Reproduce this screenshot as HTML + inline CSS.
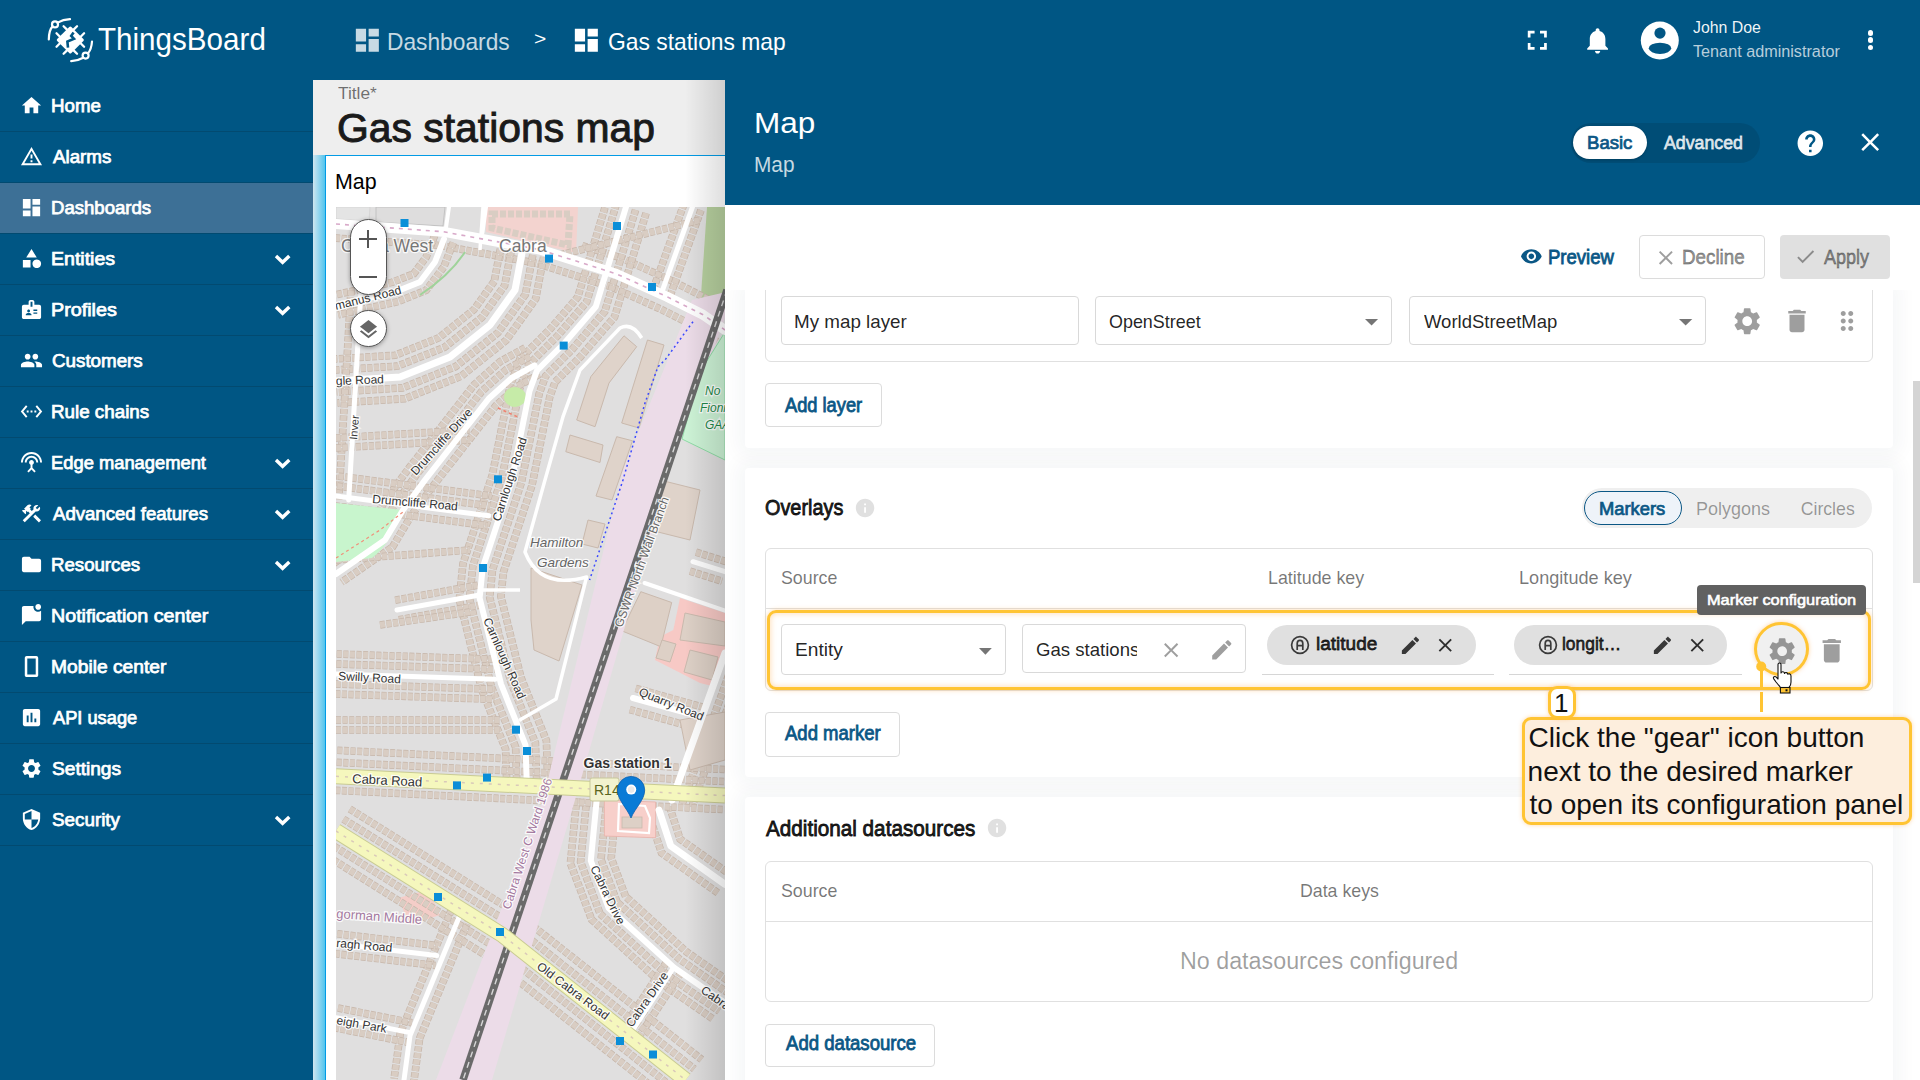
<!DOCTYPE html><html><head><meta charset="utf-8"><style>
html,body{margin:0;padding:0;width:1920px;height:1080px;overflow:hidden;background:#fff}
body{position:relative;font-family:"Liberation Sans",sans-serif}
.b{position:absolute;box-sizing:border-box}
.t{position:absolute;white-space:pre}
.ic{position:absolute;overflow:visible}
</style></head><body>
<div class="b" style="left:0px;top:0px;width:1920px;height:80px;z-index:1;background:#005684"></div>
<div class="b" style="left:0px;top:80px;width:313px;height:1000px;z-index:1;background:#005684"></div>
<div class="b" style="left:0px;top:182px;width:313px;height:51px;z-index:1;background:#3d7096"></div>
<div class="b" style="left:0px;top:131px;width:313px;height:1px;z-index:2;background:#024a70"></div>
<div class="b" style="left:0px;top:182px;width:313px;height:1px;z-index:2;background:#024a70"></div>
<div class="b" style="left:0px;top:233px;width:313px;height:1px;z-index:2;background:#024a70"></div>
<div class="b" style="left:0px;top:284px;width:313px;height:1px;z-index:2;background:#024a70"></div>
<div class="b" style="left:0px;top:335px;width:313px;height:1px;z-index:2;background:#024a70"></div>
<div class="b" style="left:0px;top:386px;width:313px;height:1px;z-index:2;background:#024a70"></div>
<div class="b" style="left:0px;top:437px;width:313px;height:1px;z-index:2;background:#024a70"></div>
<div class="b" style="left:0px;top:488px;width:313px;height:1px;z-index:2;background:#024a70"></div>
<div class="b" style="left:0px;top:539px;width:313px;height:1px;z-index:2;background:#024a70"></div>
<div class="b" style="left:0px;top:590px;width:313px;height:1px;z-index:2;background:#024a70"></div>
<div class="b" style="left:0px;top:641px;width:313px;height:1px;z-index:2;background:#024a70"></div>
<div class="b" style="left:0px;top:692px;width:313px;height:1px;z-index:2;background:#024a70"></div>
<div class="b" style="left:0px;top:743px;width:313px;height:1px;z-index:2;background:#024a70"></div>
<div class="b" style="left:0px;top:794px;width:313px;height:1px;z-index:2;background:#024a70"></div>
<div class="b" style="left:0px;top:845px;width:313px;height:1px;z-index:2;background:#024a70"></div>
<svg class="ic" style="left:40px;top:10px;width:60px;height:60px;z-index:6" viewBox="0 0 60 60">
<g fill="none" stroke="#fff" stroke-width="2.2" stroke-linecap="round">
<path d="M8.8 29.4 Q9 20 12.6 16.4"/><path d="M17.6 12.6 Q23 9.6 30 9.2"/>
<circle cx="15" cy="14.4" r="3"/>
<path d="M52 31.5 Q51.5 39 48 43.4"/><path d="M43.2 47.8 Q38 50.8 31.2 51.2"/>
<circle cx="45.6" cy="45.6" r="3"/>
</g>
<g transform="translate(30.3 30) rotate(45)">
<rect x="-10" y="-10" width="20" height="20" rx="1.5" fill="#fff"/>
<g stroke="#fff" stroke-width="2.3" stroke-linecap="round">
<path d="M-5 -10 V-14.5 M5 -10 V-14.5 M-5 10 V14.5 M5 10 V14.5 M-10 -5 H-14.5 M-10 5 H-14.5 M10 -5 H14.5 M10 5 H14.5"/>
</g></g>
<path d="M33.6 22.4 L31.2 25.8 L34 28.8 L27.4 31.6 L28 37.6" fill="none" stroke="#015684" stroke-width="2.6" stroke-linejoin="miter"/>
</svg>
<svg class="ic" style="left:352.2px;top:24.9px;width:30.7px;height:30.7px;z-index:6;" viewBox="0 0 24 24"><path fill="rgba(255,255,255,0.78)" d="M3 13h8V3H3v10zm0 8h8v-6H3v6zm10 0h8V11h-8v10zm0-18v6h8V3h-8z"/></svg>
<svg class="ic" style="left:571.4px;top:24.9px;width:30.7px;height:30.7px;z-index:6;" viewBox="0 0 24 24"><path fill="#fff" d="M3 13h8V3H3v10zm0 8h8v-6H3v6zm10 0h8V11h-8v10zm0-18v6h8V3h-8z"/></svg>
<svg class="ic" style="left:1521.2px;top:24.2px;width:32.6px;height:32.6px;z-index:6;" viewBox="0 0 24 24"><path fill="#fff" d="M7 14H5v5h5v-2H7v-3zm-2-4h2V7h3V5H5v5zm12 7h-3v2h5v-5h-2v3zM14 5v2h3v3h2V5h-5z"/></svg>
<svg class="ic" style="left:1581.8px;top:24.75px;width:31.2px;height:31.2px;z-index:6;" viewBox="0 0 24 24"><path fill="#fff" d="M12 22c1.1 0 2-.9 2-2h-4c0 1.1.89 2 2 2zm6-6v-5c0-3.07-1.64-5.64-4.5-6.32V4c0-.83-.67-1.5-1.5-1.5s-1.5.67-1.5 1.5v.68C7.63 5.36 6 7.92 6 11v5l-2 2v1h16v-1l-2-2z"/></svg>
<svg class="ic" style="left:1640px;top:21px;width:40px;height:40px;z-index:6" viewBox="1640 21 40 40">
<circle cx="1659.8" cy="40.45" r="19" fill="#fff"/><circle cx="1660" cy="33.1" r="5.6" fill="#015684"/>
<ellipse cx="1660" cy="48.3" rx="11.2" ry="5.6" fill="#015684"/></svg>
<div class="b" style="left:1867.5px;top:30.0px;width:5.5px;height:5.5px;z-index:6;background:#fff;border-radius:50%"></div>
<div class="b" style="left:1867.5px;top:37.25px;width:5.5px;height:5.5px;z-index:6;background:#fff;border-radius:50%"></div>
<div class="b" style="left:1867.5px;top:44.5px;width:5.5px;height:5.5px;z-index:6;background:#fff;border-radius:50%"></div>
<svg class="ic" style="left:20px;top:94px;width:23px;height:23px;z-index:6;" viewBox="0 0 24 24"><path fill="#fff" d="M10 20v-6h4v6h5v-8h3L12 3 2 12h3v8z"/></svg>
<svg class="ic" style="left:20px;top:145px;width:23px;height:23px;z-index:6;" viewBox="0 0 24 24"><path fill="#fff" d="M12 5.99L19.53 19H4.47L12 5.99M12 2L1 21h22L12 2zm1 14h-2v2h2v-2zm0-6h-2v4h2v-4z"/></svg>
<svg class="ic" style="left:20px;top:196px;width:23px;height:23px;z-index:6;" viewBox="0 0 24 24"><path fill="#fff" d="M3 13h8V3H3v10zm0 8h8v-6H3v6zm10 0h8V11h-8v10zm0-18v6h8V3h-8z"/></svg>
<svg class="ic" style="left:20px;top:247px;width:23px;height:23px;z-index:6;" viewBox="0 0 24 24"><path fill="#fff" d="M12 2l-5.5 9h11zM17.5 13a4.5 4.5 0 1 0 0.001 0zM3 13.5h8v8H3z"/></svg>
<svg class="ic" style="left:270px;top:233px;width:30px;height:51px;z-index:6" viewBox="270 233 30 51"><polyline points="276,256 282.6,262.3 289.3,256" fill="none" stroke="#fff" stroke-width="3.4"/></svg>
<svg class="ic" style="left:20px;top:298px;width:23px;height:23px;z-index:6;" viewBox="0 0 24 24"><path fill="#fff" d="M20 7h-5V4c0-1.1-.9-2-2-2h-2c-1.1 0-2 .9-2 2v3H4c-1.1 0-2 .9-2 2v11c0 1.1.9 2 2 2h16c1.1 0 2-.9 2-2V9c0-1.1-.9-2-2-2zM9 12c.83 0 1.5.67 1.5 1.5S9.83 15 9 15s-1.5-.67-1.5-1.5S8.17 12 9 12zm3 6H6v-.43c0-.6.36-1.15.92-1.39.64-.28 1.34-.43 2.08-.43s1.44.15 2.08.43c.55.24.92.78.92 1.39V18zm1-9h-2V4h2v5zm5 7.5h-4V15h4v1.5zm0-3h-4V12h4v1.5z"/></svg>
<svg class="ic" style="left:270px;top:284px;width:30px;height:51px;z-index:6" viewBox="270 284 30 51"><polyline points="276,307 282.6,313.3 289.3,307" fill="none" stroke="#fff" stroke-width="3.4"/></svg>
<svg class="ic" style="left:20px;top:349px;width:23px;height:23px;z-index:6;" viewBox="0 0 24 24"><path fill="#fff" d="M16 11c1.66 0 2.99-1.34 2.99-3S17.66 5 16 5c-1.66 0-3 1.34-3 3s1.34 3 3 3zm-8 0c1.66 0 2.99-1.34 2.99-3S9.66 5 8 5C6.34 5 5 6.34 5 8s1.34 3 3 3zm0 2c-2.33 0-7 1.17-7 3.5V19h14v-2.5c0-2.33-4.670-3.5-7-3.5zm8 0c-.29 0-.62.02-.97.05 1.16.84 1.97 1.97 1.97 3.45V19h6v-2.5c0-2.33-4.67-3.5-7-3.5z"/></svg>
<svg class="ic" style="left:20px;top:400px;width:23px;height:23px;z-index:6;" viewBox="0 0 24 24"><path fill="#fff" d="M7.77 6.76L6.23 5.48.82 12l5.41 6.52 1.54-1.28L3.42 12l4.35-5.24zM7 13h2v-2H7v2zm10-2h-2v2h2v-2zm-6 2h2v-2h-2v2zm6.77-7.52l-1.54 1.28L20.58 12l-4.35 5.24 1.54 1.28L23.18 12l-5.41-6.52z"/></svg>
<svg class="ic" style="left:20px;top:451px;width:23px;height:23px;z-index:6;" viewBox="0 0 24 24"><path fill="#fff" d="M12 5c-3.87 0-7 3.13-7 7h2c0-2.76 2.24-5 5-5s5 2.24 5 5h2c0-3.87-3.13-7-7-7zm1 9.29c.88-.39 1.5-1.26 1.5-2.29 0-1.38-1.12-2.5-2.5-2.5S9.5 10.62 9.5 12c0 1.02.62 1.9 1.5 2.290v3.3L7.59 21 9 22.41l3-3 3 3L16.41 21 13 17.59v-3.3zM12 1C5.93 1 1 5.93 1 12h2c0-4.97 4.03-9 9-9s9 4.03 9 9h2c0-6.07-4.93-11-11-11z"/></svg>
<svg class="ic" style="left:270px;top:437px;width:30px;height:51px;z-index:6" viewBox="270 437 30 51"><polyline points="276,460 282.6,466.3 289.3,460" fill="none" stroke="#fff" stroke-width="3.4"/></svg>
<svg class="ic" style="left:20px;top:502px;width:23px;height:23px;z-index:6;" viewBox="0 0 24 24"><path fill="#fff" d="M13.78 15.3l6 6 2.11-2.16-6-6zM17.5 10c1.93 0 3.5-1.57 3.5-3.5 0-.58-.16-1.12-.41-1.6l-2.7 2.7-1.49-1.49 2.7-2.7c-.48-.25-1.02-.41-1.6-.41C15.57 3 14 4.57 14 6.5c0 .41.08.8.21 1.16l-1.85 1.85-1.78-1.78.71-.71-1.41-1.41L12 3.49c-1.17-1.17-3.07-1.17-4.24 0L4.22 7.03l1.41 1.41H2.81l-.71.71 3.54 3.54.71-.71V9.15l1.41 1.41.71-.71 1.78 1.78-7.41 7.41 2.12 2.12L16.34 9.79c.36.13.75.21 1.16.21z"/></svg>
<svg class="ic" style="left:270px;top:488px;width:30px;height:51px;z-index:6" viewBox="270 488 30 51"><polyline points="276,511 282.6,517.3 289.3,511" fill="none" stroke="#fff" stroke-width="3.4"/></svg>
<svg class="ic" style="left:20px;top:553px;width:23px;height:23px;z-index:6;" viewBox="0 0 24 24"><path fill="#fff" d="M10 4H4c-1.1 0-1.99.9-1.99 2L2 18c0 1.1.9 2 2 2h16c1.1 0 2-.9 2-2V8c0-1.1-.9-2-2-2h-8l-2-2z"/></svg>
<svg class="ic" style="left:270px;top:539px;width:30px;height:51px;z-index:6" viewBox="270 539 30 51"><polyline points="276,562 282.6,568.3 289.3,562" fill="none" stroke="#fff" stroke-width="3.4"/></svg>
<svg class="ic" style="left:20px;top:604px;width:23px;height:23px;z-index:6;" viewBox="0 0 24 24"><path fill="#fff" d="M22 6.98V16c0 1.1-.9 2-2 2H6l-4 4V4c0-1.1.9-2 2-2h10.1c-.06.32-.1.66-.1 1 0 2.76 2.24 5 5 5 1.13 0 2.16-.39 3-1.02zM16 3c0 1.66 1.34 3 3 3s3-1.34 3-3-1.34-3-3-3-3 1.34-3 3z"/></svg>
<svg class="ic" style="left:20px;top:655px;width:23px;height:23px;z-index:6;" viewBox="0 0 24 24"><path fill="#fff" d="M17 1H7C5.9 1 5 1.9 5 3v18c0 1.1.9 2 2 2h10c1.1 0 2-.9 2-2V3c0-1.1-.9-2-2-2zm-0.6 19.4H7.6V3.6h8.8z"/></svg>
<svg class="ic" style="left:20px;top:706px;width:23px;height:23px;z-index:6;" viewBox="0 0 24 24"><path fill="#fff" d="M19 3H5c-1.1 0-2 .9-2 2v14c0 1.1.9 2 2 2h14c1.1 0 2-.9 2-2V5c0-1.1-.9-2-2-2zM9 17H7v-7h2v7zm4 0h-2V7h2v10zm4 0h-2v-4h2v4z"/></svg>
<svg class="ic" style="left:20px;top:757px;width:23px;height:23px;z-index:6;" viewBox="0 0 24 24"><path fill="#fff" d="M19.14 12.94c.04-.3.06-.61.06-.94 0-.32-.02-.64-.07-.94l2.03-1.58c.18-.14.23-.41.12-.61l-1.92-3.32c-.12-.22-.37-.29-.59-.22l-2.39.96c-.5-.38-1.03-.7-1.62-.94l-.36-2.54c-.04-.24-.24-.41-.48-.41h-3.84c-.24 0-.43.17-.47.41l-.36 2.54c-.59.24-1.13.57-1.62.94l-2.39-.96c-.22-.08-.47 0-.59.22L2.74 8.87c-.12.21-.08.47.12.61l2.03 1.58c-.05.3-.09.63-.09.94s.02.64.07.94l-2.03 1.58c-.18.14-.23.41-.12.61l1.92 3.32c.12.22.37.29.59.22l2.39-.96c.5.38 1.03.7 1.62.94l.36 2.54c.05.24.24.41.48.41h3.84c.24 0 .44-.17.47-.41l.36-2.54c.59-.24 1.13-.56 1.62-.94l2.39.96c.22.08.47 0 .59-.22l1.92-3.32c.12-.22.07-.47-.12-.61l-2.01-1.58zM12 15.6c-1.98 0-3.6-1.62-3.6-3.6s1.62-3.6 3.6-3.6 3.6 1.62 3.6 3.6-1.62 3.6-3.6 3.6z"/></svg>
<svg class="ic" style="left:20px;top:808px;width:23px;height:23px;z-index:6;" viewBox="0 0 24 24"><path fill="#fff" d="M12 1L3 5v6c0 5.55 3.84 10.74 9 12 5.16-1.26 9-6.45 9-12V5l-9-4zm0 10.99h7c-.53 4.12-3.28 7.79-7 8.94V12H5V6.3l7-3.11v8.8z"/></svg>
<svg class="ic" style="left:270px;top:794px;width:30px;height:51px;z-index:6" viewBox="270 794 30 51"><polyline points="276,817 282.6,823.3 289.3,817" fill="none" stroke="#fff" stroke-width="3.4"/></svg>
<div class="b" style="left:313px;top:80px;width:412px;height:75px;z-index:1;background:#eeeeee"></div>
<div class="b" style="left:313px;top:155px;width:12px;height:925px;z-index:1;background:linear-gradient(90deg,#cfe6f0,#52c4ee)"></div>
<div class="b" style="left:325px;top:155px;width:400px;height:925px;z-index:1;background:#fff;border-left:1.5px solid #039be5;border-top:1.5px solid #039be5"></div>
<svg class="ic" style="left:336px;top:207px;width:389px;height:873px;z-index:2;overflow:hidden" viewBox="336 207 389 873"><rect x="336" y="207" width="389" height="873" fill="#e0dfdf"/><path d="M486 207 L578 207 L576 253 L486 232Z" fill="#f3d3cf"/><path d="M492 214 L570 214 L568 245 L492 228Z" fill="none" stroke="#d9cdc3" stroke-width="7" stroke-dasharray="6 2"/><path d="M707 207 L725 207 L725 300 L700 310Z" fill="#b6cf9e"/><path d="M680 598 L725 613 L725 653 L715 686.7 L700 683 L655 660 L660 636.7 L673.3 630Z" fill="#f7c9c5"/><path d="M640.8 591.7 L671.7 602.5 L660.8 646.7 L621.7 630.8Z" fill="#ddd0c6" stroke="#c9b9ad" stroke-width="1"/><path d="M685 613 L725 622 L725 646 L680 640Z" fill="#ddd0c6" stroke="#c9b9ad" stroke-width="1"/><path d="M690 650 L718 657 L712 680 L684 672Z" fill="#ddd0c6" stroke="#c9b9ad" stroke-width="1"/><path d="M662 640 L676 644 L670 662 L656 658Z" fill="#ddd0c6" stroke="#c9b9ad" stroke-width="1"/><path d="M398 898 L428 890 L440 915 L410 925Z" fill="#f4cdc8"/><path d="M335.0 238.0 L441.2 245.6 L536.3 263.2 L611.0 286.8 L661.0 309.3 L695.5 326.6 L717.0 341.5" fill="none" stroke="#c6b6aa" stroke-width="7.6" stroke-dasharray="5 1.6"/><path d="M335.0 238.0 L441.2 245.6 L536.3 263.2 L611.0 286.8 L661.0 309.3 L695.5 326.6 L717.0 341.5" fill="none" stroke="#d9cdc3" stroke-width="6.2" stroke-dasharray="5 1.6"/><path d="M582.2 245.6 L621.0 257.9 L673.1 281.4 L708.4 299.5" fill="none" stroke="#c6b6aa" stroke-width="7.6" stroke-dasharray="5 1.6"/><path d="M582.2 245.6 L621.0 257.9 L673.1 281.4 L708.4 299.5" fill="none" stroke="#d9cdc3" stroke-width="6.2" stroke-dasharray="5 1.6"/><path d="M532.8 255.0 L525.4 294.4 L498.1 332.6 L455.6 366.6 L402.4 387.9 L336.7 392.0" fill="none" stroke="#c6b6aa" stroke-width="7.6" stroke-dasharray="5 1.6"/><path d="M532.8 255.0 L525.4 294.4 L498.1 332.6 L455.6 366.6 L402.4 387.9 L336.7 392.0" fill="none" stroke="#d9cdc3" stroke-width="6.2" stroke-dasharray="5 1.6"/><path d="M511.2 251.0 L504.6 285.6 L481.9 317.4 L444.4 347.4 L397.6 366.1 L335.3 370.0" fill="none" stroke="#c6b6aa" stroke-width="7.6" stroke-dasharray="5 1.6"/><path d="M511.2 251.0 L504.6 285.6 L481.9 317.4 L444.4 347.4 L397.6 366.1 L335.3 370.0" fill="none" stroke="#d9cdc3" stroke-width="6.2" stroke-dasharray="5 1.6"/><path d="M543.6 257.1 L535.7 298.8 L506.1 340.3 L461.2 376.2 L404.9 398.7 L337.4 403.0" fill="none" stroke="#c6b6aa" stroke-width="7.6" stroke-dasharray="5 1.6"/><path d="M543.6 257.1 L535.7 298.8 L506.1 340.3 L461.2 376.2 L404.9 398.7 L337.4 403.0" fill="none" stroke="#d9cdc3" stroke-width="6.2" stroke-dasharray="5 1.6"/><path d="M500.4 248.9 L494.3 281.2 L473.9 309.7 L438.8 337.8 L395.1 355.3 L334.6 359.0" fill="none" stroke="#c6b6aa" stroke-width="7.6" stroke-dasharray="5 1.6"/><path d="M500.4 248.9 L494.3 281.2 L473.9 309.7 L438.8 337.8 L395.1 355.3 L334.6 359.0" fill="none" stroke="#d9cdc3" stroke-width="6.2" stroke-dasharray="5 1.6"/><path d="M453.3 242.6 L443.8 266.9 L426.3 290.2 L398.0 301.6 L338.2 314.8" fill="none" stroke="#c6b6aa" stroke-width="7.6" stroke-dasharray="5 1.6"/><path d="M453.3 242.6 L443.8 266.9 L426.3 290.2 L398.0 301.6 L338.2 314.8" fill="none" stroke="#d9cdc3" stroke-width="6.2" stroke-dasharray="5 1.6"/><path d="M434.7 235.4 L426.2 257.1 L413.7 273.8 L392.0 282.4 L333.8 295.2" fill="none" stroke="#c6b6aa" stroke-width="7.6" stroke-dasharray="5 1.6"/><path d="M434.7 235.4 L426.2 257.1 L413.7 273.8 L392.0 282.4 L333.8 295.2" fill="none" stroke="#d9cdc3" stroke-width="6.2" stroke-dasharray="5 1.6"/><path d="M351.0 290.4 L338.7 499.4" fill="none" stroke="#c6b6aa" stroke-width="7.6" stroke-dasharray="5 1.6"/><path d="M351.0 290.4 L338.7 499.4" fill="none" stroke="#d9cdc3" stroke-width="6.2" stroke-dasharray="5 1.6"/><path d="M635.6 209.9 L604.7 311.7 L572.3 349.3 L545.6 376.0 L539.2 393.7 L521.4 482.6 L492.5 569.9 L489.7 597.3 L510.5 680.9 L535.4 742.9 L537.0 789.7" fill="none" stroke="#c6b6aa" stroke-width="7.6" stroke-dasharray="5 1.6"/><path d="M635.6 209.9 L604.7 311.7 L572.3 349.3 L545.6 376.0 L539.2 393.7 L521.4 482.6 L492.5 569.9 L489.7 597.3 L510.5 680.9 L535.4 742.9 L537.0 789.7" fill="none" stroke="#d9cdc3" stroke-width="6.2" stroke-dasharray="5 1.6"/><path d="M616.4 204.1 L586.7 301.9 L557.7 335.7 L528.4 365.0 L519.8 388.3 L502.0 477.4 L472.9 565.7 L469.5 598.7 L491.5 687.1 L515.6 747.1 L517.0 790.3" fill="none" stroke="#c6b6aa" stroke-width="7.6" stroke-dasharray="5 1.6"/><path d="M616.4 204.1 L586.7 301.9 L557.7 335.7 L528.4 365.0 L519.8 388.3 L502.0 477.4 L472.9 565.7 L469.5 598.7 L491.5 687.1 L515.6 747.1 L517.0 790.3" fill="none" stroke="#d9cdc3" stroke-width="6.2" stroke-dasharray="5 1.6"/><path d="M606.9 201.2 L577.8 297.0 L550.3 328.9 L519.7 359.5 L510.2 385.6 L492.3 474.9 L463.0 563.6 L459.3 599.4 L481.9 690.2 L505.6 749.2 L507.0 790.7" fill="none" stroke="#c6b6aa" stroke-width="7.6" stroke-dasharray="5 1.6"/><path d="M606.9 201.2 L577.8 297.0 L550.3 328.9 L519.7 359.5 L510.2 385.6 L492.3 474.9 L463.0 563.6 L459.3 599.4 L481.9 690.2 L505.6 749.2 L507.0 790.7" fill="none" stroke="#d9cdc3" stroke-width="6.2" stroke-dasharray="5 1.6"/><path d="M646.1 213.1 L614.5 317.1 L580.4 356.8 L555.1 382.1 L549.8 396.7 L532.0 485.4 L503.4 572.2 L500.9 596.5 L521.0 677.5 L546.4 740.6 L548.0 789.3" fill="none" stroke="#c6b6aa" stroke-width="7.6" stroke-dasharray="5 1.6"/><path d="M646.1 213.1 L614.5 317.1 L580.4 356.8 L555.1 382.1 L549.8 396.7 L532.0 485.4 L503.4 572.2 L500.9 596.5 L521.0 677.5 L546.4 740.6 L548.0 789.3" fill="none" stroke="#d9cdc3" stroke-width="6.2" stroke-dasharray="5 1.6"/><path d="M539.4 374.2 L517.5 386.2 L496.1 405.4 L433.0 486.0 L411.3 515.5 L392.5 547.0 L341.7 582.2" fill="none" stroke="#c6b6aa" stroke-width="7.6" stroke-dasharray="5 1.6"/><path d="M539.4 374.2 L517.5 386.2 L496.1 405.4 L433.0 486.0 L411.3 515.5 L392.5 547.0 L341.7 582.2" fill="none" stroke="#d9cdc3" stroke-width="6.2" stroke-dasharray="5 1.6"/><path d="M529.8 356.6 L505.9 369.8 L481.5 391.6 L417.0 474.0 L394.7 504.5 L377.5 533.0 L330.3 565.8" fill="none" stroke="#c6b6aa" stroke-width="7.6" stroke-dasharray="5 1.6"/><path d="M529.8 356.6 L505.9 369.8 L481.5 391.6 L417.0 474.0 L394.7 504.5 L377.5 533.0 L330.3 565.8" fill="none" stroke="#d9cdc3" stroke-width="6.2" stroke-dasharray="5 1.6"/><path d="M525.0 347.9 L500.1 361.6 L474.1 384.8 L409.1 467.9 L386.3 498.9 L370.1 526.0 L324.6 557.6" fill="none" stroke="#c6b6aa" stroke-width="7.6" stroke-dasharray="5 1.6"/><path d="M525.0 347.9 L500.1 361.6 L474.1 384.8 L409.1 467.9 L386.3 498.9 L370.1 526.0 L324.6 557.6" fill="none" stroke="#d9cdc3" stroke-width="6.2" stroke-dasharray="5 1.6"/><path d="M337.3 486.1 L490.1 505.9" fill="none" stroke="#c6b6aa" stroke-width="7.6" stroke-dasharray="5 1.6"/><path d="M337.3 486.1 L490.1 505.9" fill="none" stroke="#d9cdc3" stroke-width="6.2" stroke-dasharray="5 1.6"/><path d="M334.7 505.9 L487.5 525.7" fill="none" stroke="#c6b6aa" stroke-width="7.6" stroke-dasharray="5 1.6"/><path d="M334.7 505.9 L487.5 525.7" fill="none" stroke="#d9cdc3" stroke-width="6.2" stroke-dasharray="5 1.6"/><path d="M338.6 476.2 L491.4 496.0" fill="none" stroke="#c6b6aa" stroke-width="7.6" stroke-dasharray="5 1.6"/><path d="M338.6 476.2 L491.4 496.0" fill="none" stroke="#d9cdc3" stroke-width="6.2" stroke-dasharray="5 1.6"/><path d="M336.3 664.0 L495.3 669.3" fill="none" stroke="#c6b6aa" stroke-width="7.6" stroke-dasharray="5 1.6"/><path d="M336.3 664.0 L495.3 669.3" fill="none" stroke="#d9cdc3" stroke-width="6.2" stroke-dasharray="5 1.6"/><path d="M335.7 684.0 L494.7 689.3" fill="none" stroke="#c6b6aa" stroke-width="7.6" stroke-dasharray="5 1.6"/><path d="M335.7 684.0 L494.7 689.3" fill="none" stroke="#d9cdc3" stroke-width="6.2" stroke-dasharray="5 1.6"/><path d="M336.7 654.0 L495.7 659.3" fill="none" stroke="#c6b6aa" stroke-width="7.6" stroke-dasharray="5 1.6"/><path d="M336.7 654.0 L495.7 659.3" fill="none" stroke="#d9cdc3" stroke-width="6.2" stroke-dasharray="5 1.6"/><path d="M335.3 694.0 L494.3 699.3" fill="none" stroke="#c6b6aa" stroke-width="7.6" stroke-dasharray="5 1.6"/><path d="M335.3 694.0 L494.3 699.3" fill="none" stroke="#d9cdc3" stroke-width="6.2" stroke-dasharray="5 1.6"/><path d="M395.2 600.2 L477.8 585.2" fill="none" stroke="#c6b6aa" stroke-width="7.6" stroke-dasharray="5 1.6"/><path d="M395.2 600.2 L477.8 585.2" fill="none" stroke="#d9cdc3" stroke-width="6.2" stroke-dasharray="5 1.6"/><path d="M398.8 619.8 L481.4 604.8" fill="none" stroke="#c6b6aa" stroke-width="7.6" stroke-dasharray="5 1.6"/><path d="M398.8 619.8 L481.4 604.8" fill="none" stroke="#d9cdc3" stroke-width="6.2" stroke-dasharray="5 1.6"/><path d="M701.0 210.1 L670.5 294.7" fill="none" stroke="#c6b6aa" stroke-width="7.6" stroke-dasharray="5 1.6"/><path d="M701.0 210.1 L670.5 294.7" fill="none" stroke="#d9cdc3" stroke-width="6.2" stroke-dasharray="5 1.6"/><path d="M684.0 203.9 L653.5 288.5" fill="none" stroke="#c6b6aa" stroke-width="7.6" stroke-dasharray="5 1.6"/><path d="M684.0 203.9 L653.5 288.5" fill="none" stroke="#d9cdc3" stroke-width="6.2" stroke-dasharray="5 1.6"/><path d="M696.0 552.2 L728.0 562.2" fill="none" stroke="#c6b6aa" stroke-width="7.6" stroke-dasharray="5 1.6"/><path d="M696.0 552.2 L728.0 562.2" fill="none" stroke="#d9cdc3" stroke-width="6.2" stroke-dasharray="5 1.6"/><path d="M690.0 571.2 L722.0 581.2" fill="none" stroke="#c6b6aa" stroke-width="7.6" stroke-dasharray="5 1.6"/><path d="M690.0 571.2 L722.0 581.2" fill="none" stroke="#d9cdc3" stroke-width="6.2" stroke-dasharray="5 1.6"/><path d="M635.7 688.4 L702.7 707.1" fill="none" stroke="#c6b6aa" stroke-width="7.6" stroke-dasharray="5 1.6"/><path d="M635.7 688.4 L702.7 707.1" fill="none" stroke="#d9cdc3" stroke-width="6.2" stroke-dasharray="5 1.6"/><path d="M629.8 709.6 L696.8 728.3" fill="none" stroke="#c6b6aa" stroke-width="7.6" stroke-dasharray="5 1.6"/><path d="M629.8 709.6 L696.8 728.3" fill="none" stroke="#d9cdc3" stroke-width="6.2" stroke-dasharray="5 1.6"/><path d="M735.3 656.7 L682.3 803.7" fill="none" stroke="#c6b6aa" stroke-width="7.6" stroke-dasharray="5 1.6"/><path d="M735.3 656.7 L682.3 803.7" fill="none" stroke="#d9cdc3" stroke-width="6.2" stroke-dasharray="5 1.6"/><path d="M744.8 660.1 L691.8 807.1" fill="none" stroke="#c6b6aa" stroke-width="7.6" stroke-dasharray="5 1.6"/><path d="M744.8 660.1 L691.8 807.1" fill="none" stroke="#d9cdc3" stroke-width="6.2" stroke-dasharray="5 1.6"/><path d="M669.5 806.6 L680.1 839.1 L731.4 875.4" fill="none" stroke="#c6b6aa" stroke-width="7.6" stroke-dasharray="5 1.6"/><path d="M669.5 806.6 L680.1 839.1 L731.4 875.4" fill="none" stroke="#d9cdc3" stroke-width="6.2" stroke-dasharray="5 1.6"/><path d="M648.5 813.4 L661.5 852.9 L718.6 893.4" fill="none" stroke="#c6b6aa" stroke-width="7.6" stroke-dasharray="5 1.6"/><path d="M648.5 813.4 L661.5 852.9 L718.6 893.4" fill="none" stroke="#d9cdc3" stroke-width="6.2" stroke-dasharray="5 1.6"/><path d="M606.7 801.0 L601.0 859.4 L617.1 902.2 L680.0 959.6 L730.7 994.8" fill="none" stroke="#c6b6aa" stroke-width="7.6" stroke-dasharray="5 1.6"/><path d="M606.7 801.0 L601.0 859.4 L617.1 902.2 L680.0 959.6 L730.7 994.8" fill="none" stroke="#d9cdc3" stroke-width="6.2" stroke-dasharray="5 1.6"/><path d="M586.7 799.0 L580.6 862.0 L600.1 913.8 L667.6 975.2 L719.3 1011.2" fill="none" stroke="#c6b6aa" stroke-width="7.6" stroke-dasharray="5 1.6"/><path d="M586.7 799.0 L580.6 862.0 L600.1 913.8 L667.6 975.2 L719.3 1011.2" fill="none" stroke="#d9cdc3" stroke-width="6.2" stroke-dasharray="5 1.6"/><path d="M616.6 801.9 L611.2 858.0 L625.6 896.5 L686.3 951.7 L736.4 986.6" fill="none" stroke="#c6b6aa" stroke-width="7.6" stroke-dasharray="5 1.6"/><path d="M616.6 801.9 L611.2 858.0 L625.6 896.5 L686.3 951.7 L736.4 986.6" fill="none" stroke="#d9cdc3" stroke-width="6.2" stroke-dasharray="5 1.6"/><path d="M576.8 798.1 L570.4 863.4 L591.6 919.5 L661.3 983.1 L713.6 1019.4" fill="none" stroke="#c6b6aa" stroke-width="7.6" stroke-dasharray="5 1.6"/><path d="M576.8 798.1 L570.4 863.4 L591.6 919.5 L661.3 983.1 L713.6 1019.4" fill="none" stroke="#d9cdc3" stroke-width="6.2" stroke-dasharray="5 1.6"/><path d="M681.3 972.3 L636.5 1040.5" fill="none" stroke="#c6b6aa" stroke-width="7.6" stroke-dasharray="5 1.6"/><path d="M681.3 972.3 L636.5 1040.5" fill="none" stroke="#d9cdc3" stroke-width="6.2" stroke-dasharray="5 1.6"/><path d="M666.3 962.5 L621.5 1030.7" fill="none" stroke="#c6b6aa" stroke-width="7.6" stroke-dasharray="5 1.6"/><path d="M666.3 962.5 L621.5 1030.7" fill="none" stroke="#d9cdc3" stroke-width="6.2" stroke-dasharray="5 1.6"/><path d="M469.6 917.8 L419.7 1038.2 L413.9 1081.3" fill="none" stroke="#c6b6aa" stroke-width="7.6" stroke-dasharray="5 1.6"/><path d="M469.6 917.8 L419.7 1038.2 L413.9 1081.3" fill="none" stroke="#d9cdc3" stroke-width="6.2" stroke-dasharray="5 1.6"/><path d="M451.2 910.2 L400.3 1033.0 L394.1 1078.7" fill="none" stroke="#c6b6aa" stroke-width="7.6" stroke-dasharray="5 1.6"/><path d="M451.2 910.2 L400.3 1033.0 L394.1 1078.7" fill="none" stroke="#d9cdc3" stroke-width="6.2" stroke-dasharray="5 1.6"/><path d="M337.2 933.8 L437.9 945.7" fill="none" stroke="#c6b6aa" stroke-width="7.6" stroke-dasharray="5 1.6"/><path d="M337.2 933.8 L437.9 945.7" fill="none" stroke="#d9cdc3" stroke-width="6.2" stroke-dasharray="5 1.6"/><path d="M334.8 953.6 L435.5 965.5" fill="none" stroke="#c6b6aa" stroke-width="7.6" stroke-dasharray="5 1.6"/><path d="M334.8 953.6 L435.5 965.5" fill="none" stroke="#d9cdc3" stroke-width="6.2" stroke-dasharray="5 1.6"/><path d="M338.0 1008.0 L412.0 1022.8" fill="none" stroke="#c6b6aa" stroke-width="7.6" stroke-dasharray="5 1.6"/><path d="M338.0 1008.0 L412.0 1022.8" fill="none" stroke="#d9cdc3" stroke-width="6.2" stroke-dasharray="5 1.6"/><path d="M334.0 1027.6 L408.0 1042.4" fill="none" stroke="#c6b6aa" stroke-width="7.6" stroke-dasharray="5 1.6"/><path d="M334.0 1027.6 L408.0 1042.4" fill="none" stroke="#d9cdc3" stroke-width="6.2" stroke-dasharray="5 1.6"/><path d="M336.7 762.3 L725.7 781.6" fill="none" stroke="#c6b6aa" stroke-width="7.6" stroke-dasharray="5 1.6"/><path d="M336.7 762.3 L725.7 781.6" fill="none" stroke="#d9cdc3" stroke-width="6.2" stroke-dasharray="5 1.6"/><path d="M335.3 790.3 L724.3 809.6" fill="none" stroke="#c6b6aa" stroke-width="7.6" stroke-dasharray="5 1.6"/><path d="M335.3 790.3 L724.3 809.6" fill="none" stroke="#d9cdc3" stroke-width="6.2" stroke-dasharray="5 1.6"/><path d="M337.3 750.3 L726.3 769.6" fill="none" stroke="#c6b6aa" stroke-width="7.6" stroke-dasharray="5 1.6"/><path d="M337.3 750.3 L726.3 769.6" fill="none" stroke="#d9cdc3" stroke-width="6.2" stroke-dasharray="5 1.6"/><path d="M343.4 819.1 L510.1 923.3 L694.3 1069.0" fill="none" stroke="#c6b6aa" stroke-width="7.6" stroke-dasharray="5 1.6"/><path d="M343.4 819.1 L510.1 923.3 L694.3 1069.0" fill="none" stroke="#d9cdc3" stroke-width="6.2" stroke-dasharray="5 1.6"/><path d="M328.6 842.9 L493.9 946.3 L676.9 1091.0" fill="none" stroke="#c6b6aa" stroke-width="7.6" stroke-dasharray="5 1.6"/><path d="M328.6 842.9 L493.9 946.3 L676.9 1091.0" fill="none" stroke="#d9cdc3" stroke-width="6.2" stroke-dasharray="5 1.6"/><path d="M349.8 809.0 L517.0 913.5 L701.7 1059.6" fill="none" stroke="#c6b6aa" stroke-width="7.6" stroke-dasharray="5 1.6"/><path d="M349.8 809.0 L517.0 913.5 L701.7 1059.6" fill="none" stroke="#d9cdc3" stroke-width="6.2" stroke-dasharray="5 1.6"/><path d="M322.2 853.0 L487.0 956.1 L669.5 1100.4" fill="none" stroke="#c6b6aa" stroke-width="7.6" stroke-dasharray="5 1.6"/><path d="M322.2 853.0 L487.0 956.1 L669.5 1100.4" fill="none" stroke="#d9cdc3" stroke-width="6.2" stroke-dasharray="5 1.6"/><path d="M336.0 448.0 L470.0 440.0" fill="none" stroke="#c6b6aa" stroke-width="7.6" stroke-dasharray="5 1.6"/><path d="M336.0 448.0 L470.0 440.0" fill="none" stroke="#d9cdc3" stroke-width="6.2" stroke-dasharray="5 1.6"/><path d="M335.4 438.0 L469.4 430.0" fill="none" stroke="#c6b6aa" stroke-width="7.6" stroke-dasharray="5 1.6"/><path d="M335.4 438.0 L469.4 430.0" fill="none" stroke="#d9cdc3" stroke-width="6.2" stroke-dasharray="5 1.6"/><path d="M336.0 560.0 L470.0 550.0" fill="none" stroke="#c6b6aa" stroke-width="7.6" stroke-dasharray="5 1.6"/><path d="M336.0 560.0 L470.0 550.0" fill="none" stroke="#d9cdc3" stroke-width="6.2" stroke-dasharray="5 1.6"/><path d="M380.0 625.0 L470.0 612.0" fill="none" stroke="#c6b6aa" stroke-width="7.6" stroke-dasharray="5 1.6"/><path d="M380.0 625.0 L470.0 612.0" fill="none" stroke="#d9cdc3" stroke-width="6.2" stroke-dasharray="5 1.6"/><path d="M336.0 720.0 L500.0 720.0" fill="none" stroke="#c6b6aa" stroke-width="7.6" stroke-dasharray="5 1.6"/><path d="M336.0 720.0 L500.0 720.0" fill="none" stroke="#d9cdc3" stroke-width="6.2" stroke-dasharray="5 1.6"/><path d="M336.0 730.0 L500.0 730.0" fill="none" stroke="#c6b6aa" stroke-width="7.6" stroke-dasharray="5 1.6"/><path d="M336.0 730.0 L500.0 730.0" fill="none" stroke="#d9cdc3" stroke-width="6.2" stroke-dasharray="5 1.6"/><path d="M560.0 255.0 L700.0 220.0" fill="none" stroke="#c6b6aa" stroke-width="7.6" stroke-dasharray="5 1.6"/><path d="M560.0 255.0 L700.0 220.0" fill="none" stroke="#d9cdc3" stroke-width="6.2" stroke-dasharray="5 1.6"/><path d="M692 300 L735 290 L670 470 L575 800 L492 1080 L436 1080 L543 800 L623 470Z" fill="#ecdce8"/><path d="M336 503 L403 510 Q390 545 372 558 L336 562Z" fill="#c8f5cd"/><ellipse cx="515" cy="397" rx="11" ry="10" fill="#c6eba8"/><path d="M725 332 L700 372 L682 439 L725 460Z" fill="#cdf3d6" stroke="#8fdca6" stroke-width="1"/><path d="M604.4 800 L655.6 802 L655.6 837.8 L604.4 836Z" fill="#f7cfca" stroke="#e9b1aa" stroke-width="0.8"/><path d="M619 804 L645 806 L650 818 L649 833 L618 831Z" fill="none" stroke="#fff" stroke-width="2.2"/><rect x="622" y="817" width="20" height="11" fill="#ddd0c6" stroke="#c9b9ad" stroke-width="0.8"/><path d="M376 207 L445 207 L443 226 L376 222Z" fill="#dedddd" stroke="#bbb" stroke-width="0.8"/><path d="M336 207 L370 207 L369 221 L336 219Z" fill="#e4e4e4" stroke="#ccc" stroke-width="0.6"/><path d="M624 335.8 L636.7 346.7 L609 383 L595 426.7 L576.7 420 L590.8 376.7Z" fill="#dfd3ca" stroke="#c9b9ad" stroke-width="1"/><path d="M647.5 340 L664 345 L639 428 L621.7 423Z" fill="#dfd3ca" stroke="#c9b9ad" stroke-width="1"/><path d="M570 435 L603 445 L600 462.5 L565.8 451.7Z" fill="#dfd3ca" stroke="#c9b9ad" stroke-width="1"/><path d="M616.7 436.7 L632.5 440.8 L612 500 L596 496Z" fill="#dfd3ca" stroke="#c9b9ad" stroke-width="1"/><path d="M531 568 L582 585 L559 661 L534 650 L531 620Z" fill="#dfd3ca" stroke="#c9b9ad" stroke-width="1"/><path d="M588 520 L605 524 L598 548 L582 544Z" fill="#dfd3ca" stroke="#c9b9ad" stroke-width="1"/><path d="M660 480 L700 490 L690 540 L650 530Z" fill="#dfd3ca" stroke="#c9b9ad" stroke-width="1"/><path d="M680 720 L725 712 L725 760 L690 770Z" fill="#dfd3ca" stroke="#c9b9ad" stroke-width="1"/><path d="M336 224 L443 231.7 L539.7 249.6 L616 273.7 L667 296.7 L702.6 314.5 L725 330" fill="none" stroke="#fff" stroke-width="10" stroke-linejoin="round" stroke-linecap="round"/><path d="M522 253 L515 290 L490 325 L450 357 L400 377 L336 381" fill="none" stroke="#fff" stroke-width="7" stroke-linejoin="round" stroke-linecap="round"/><path d="M444 239 L435 262 L420 282 L395 292 L336 305" fill="none" stroke="#fff" stroke-width="6" stroke-linejoin="round" stroke-linecap="round"/><path d="M361 291 L348.7 500" fill="none" stroke="#fff" stroke-width="5" stroke-linejoin="round" stroke-linecap="round"/><path d="M626 207 L595.7 306.8 L565 342.5 L537 370.5 L529.5 391 L511.7 480 L482.7 567.8 L479.6 598 L501 684 L525.5 745 L527 790" fill="none" stroke="#fff" stroke-width="6" stroke-linejoin="round" stroke-linecap="round"/><path d="M534.6 365.4 L511.7 378 L488.8 398.5 L425 480 L403 510 L385 540 L336 574" fill="none" stroke="#fff" stroke-width="6" stroke-linejoin="round" stroke-linecap="round"/><path d="M336 496 L488.8 515.8" fill="none" stroke="#fff" stroke-width="5" stroke-linejoin="round" stroke-linecap="round"/><path d="M336 674 L495 679.3" fill="none" stroke="#fff" stroke-width="5" stroke-linejoin="round" stroke-linecap="round"/><path d="M397 610 L479.6 595" fill="none" stroke="#fff" stroke-width="5" stroke-linejoin="round" stroke-linecap="round"/><path d="M692.5 207 L662 291.6" fill="none" stroke="#fff" stroke-width="5" stroke-linejoin="round" stroke-linecap="round"/><path d="M486 207 L482.4 233" fill="none" stroke="#fff" stroke-width="4" stroke-linejoin="round" stroke-linecap="round"/><path d="M449 207 L445.5 231" fill="none" stroke="#fff" stroke-width="4" stroke-linejoin="round" stroke-linecap="round"/><path d="M644.6 583 L725 610.6" fill="none" stroke="#fff" stroke-width="4" stroke-linejoin="round" stroke-linecap="round"/><path d="M693 561.7 L725 571.7" fill="none" stroke="#fff" stroke-width="5" stroke-linejoin="round" stroke-linecap="round"/><path d="M633 698 L700 716.7" fill="none" stroke="#fff" stroke-width="6" stroke-linejoin="round" stroke-linecap="round"/><path d="M725 653 L672 800" fill="none" stroke="#fff" stroke-width="7" stroke-linejoin="round" stroke-linecap="round"/><path d="M659 810 L670.8 846 L725 884.4" fill="none" stroke="#fff" stroke-width="7" stroke-linejoin="round" stroke-linecap="round"/><path d="M596.7 800 L590.8 860.7 L608.6 908 L673.8 967.4 L725 1003" fill="none" stroke="#fff" stroke-width="6" stroke-linejoin="round" stroke-linecap="round"/><path d="M673.8 967.4 L629 1035.6" fill="none" stroke="#fff" stroke-width="5" stroke-linejoin="round" stroke-linecap="round"/><path d="M460.4 914 L410 1035.6 L404 1080" fill="none" stroke="#fff" stroke-width="5" stroke-linejoin="round" stroke-linecap="round"/><path d="M336 943.7 L436.7 955.6" fill="none" stroke="#fff" stroke-width="5" stroke-linejoin="round" stroke-linecap="round"/><path d="M336 1017.8 L410 1032.6" fill="none" stroke="#fff" stroke-width="5" stroke-linejoin="round" stroke-linecap="round"/><path d="M641.7 338 Q632 322 620 328 L580 370 L563 416.7 L545 480 L525 552 Q540 590 586.6 577 L556 699 L519 720.6" fill="none" stroke="#fff" stroke-width="3.5" stroke-linejoin="round"/><path d="M480 590 L520 590" fill="none" stroke="#fff" stroke-width="3.5" stroke-linejoin="round"/><path d="M480 250 L483 207" fill="none" stroke="#fff" stroke-width="3.5" stroke-linejoin="round"/><path d="M336 224 L443 231.7 L539.7 249.6 L616 273.7 L667 296.7 L702.6 314.5 L725 330" fill="none" stroke="#d8a9c9" stroke-width="1.6" stroke-dasharray="4 5"/><path d="M727 290 L463 1080" fill="none" stroke="#6a6a6a" stroke-width="7.5"/><path d="M727 290 L463 1080" fill="none" stroke="#d8d8d8" stroke-width="1.4" stroke-dasharray="6 5"/><path d="M336 776.3 L725 795.6" fill="none" stroke="#c9cb93" stroke-width="16"/><path d="M336 776.3 L725 795.6" fill="none" stroke="#f5f7bd" stroke-width="14"/><path d="M336 776.3 L725 795.6" fill="none" stroke="#d9c9b9" stroke-width="1.5" stroke-dasharray="3 6"/><path d="M336 831 L502 934.8 L685.6 1080" fill="none" stroke="#c9cb93" stroke-width="16"/><path d="M336 831 L502 934.8 L685.6 1080" fill="none" stroke="#f5f7bd" stroke-width="14"/><path d="M336 831 L502 934.8 L685.6 1080" fill="none" stroke="#d9c9b9" stroke-width="1.5" stroke-dasharray="3 6"/><path d="M693 321.7 L665 360 L658 366.7 L645 403 L623 480 L589.6 580" fill="none" stroke="#3b49ff" stroke-width="1.5" stroke-dasharray="2 3"/><path d="M336 558 L380 530 L403 512" fill="none" stroke="#f0907a" stroke-width="1.2" stroke-dasharray="3 3"/><path d="M498 408 L520 418" fill="none" stroke="#f08070" stroke-width="1.5" stroke-dasharray="3 3"/><path d="M420 295 Q450 275 465 252" fill="none" stroke="#9fd39a" stroke-width="2"/><rect x="400.5" y="219" width="8" height="8" fill="#0a8ed8"/><rect x="613" y="222" width="8" height="8" fill="#0a8ed8"/><rect x="545" y="254.60000000000002" width="8" height="8" fill="#0a8ed8"/><rect x="648" y="283" width="8" height="8" fill="#0a8ed8"/><rect x="559.7" y="341.6" width="8" height="8" fill="#0a8ed8"/><rect x="494" y="475.3" width="8" height="8" fill="#0a8ed8"/><rect x="479" y="564" width="8" height="8" fill="#0a8ed8"/><rect x="512" y="725.7" width="8" height="8" fill="#0a8ed8"/><rect x="523" y="747" width="8" height="8" fill="#0a8ed8"/><rect x="483" y="773.6" width="8" height="8" fill="#0a8ed8"/><rect x="453" y="781.4" width="8" height="8" fill="#0a8ed8"/><rect x="434" y="893" width="8" height="8" fill="#0a8ed8"/><rect x="496" y="928" width="8" height="8" fill="#0a8ed8"/><rect x="616" y="1037" width="8" height="8" fill="#0a8ed8"/><rect x="649" y="1050.5" width="8" height="8" fill="#0a8ed8"/><text x="341" y="252" transform="rotate(0 341 252)" style="font:400 17.5px 'Liberation Sans';fill:#777;paint-order:stroke;stroke:#fff;stroke-width:2.5px;stroke-opacity:0.85;">Cabra West</text><text x="499" y="252" transform="rotate(0 499 252)" style="font:400 17.5px 'Liberation Sans';fill:#777;paint-order:stroke;stroke:#fff;stroke-width:2.5px;stroke-opacity:0.85;">Cabra</text><text x="336" y="310" transform="rotate(-14 336 310)" style="font:400 12px 'Liberation Sans';fill:#333;paint-order:stroke;stroke:#fff;stroke-width:2.5px;stroke-opacity:0.85;">manus Road</text><text x="336" y="385" transform="rotate(-2 336 385)" style="font:400 12px 'Liberation Sans';fill:#333;paint-order:stroke;stroke:#fff;stroke-width:2.5px;stroke-opacity:0.85;">gle Road</text><text x="357" y="440" transform="rotate(-85 357 440)" style="font:400 11px 'Liberation Sans';fill:#333;paint-order:stroke;stroke:#fff;stroke-width:2.5px;stroke-opacity:0.85;">Inver</text><text x="416" y="476" transform="rotate(-48 416 476)" style="font:400 12px 'Liberation Sans';fill:#333;paint-order:stroke;stroke:#fff;stroke-width:2.5px;stroke-opacity:0.85;">Drumcliffe Drive</text><text x="500" y="522" transform="rotate(-72 500 522)" style="font:400 12px 'Liberation Sans';fill:#333;paint-order:stroke;stroke:#fff;stroke-width:2.5px;stroke-opacity:0.85;">Carnlough Road</text><text x="372" y="503" transform="rotate(5 372 503)" style="font:400 12px 'Liberation Sans';fill:#333;paint-order:stroke;stroke:#fff;stroke-width:2.5px;stroke-opacity:0.85;">Drumcliffe Road</text><text x="530" y="547" transform="rotate(0 530 547)" style="font:400 13.5px 'Liberation Sans';fill:#666;font-style:italic;paint-order:stroke;stroke:#fff;stroke-width:2.5px;stroke-opacity:0.85;">Hamilton</text><text x="537" y="567" transform="rotate(0 537 567)" style="font:400 13.5px 'Liberation Sans';fill:#666;font-style:italic;paint-order:stroke;stroke:#fff;stroke-width:2.5px;stroke-opacity:0.85;">Gardens</text><text x="622" y="628" transform="rotate(-70 622 628)" style="font:400 12px 'Liberation Sans';fill:#666;paint-order:stroke;stroke:#fff;stroke-width:2.5px;stroke-opacity:0.85;">GSWR North Wall Branch</text><text x="338" y="680" transform="rotate(3 338 680)" style="font:400 12px 'Liberation Sans';fill:#333;paint-order:stroke;stroke:#fff;stroke-width:2.5px;stroke-opacity:0.85;">Swilly Road</text><text x="483" y="620" transform="rotate(66 483 620)" style="font:400 12px 'Liberation Sans';fill:#333;paint-order:stroke;stroke:#fff;stroke-width:2.5px;stroke-opacity:0.85;">Carnlough Road</text><text x="638" y="695" transform="rotate(22 638 695)" style="font:400 12px 'Liberation Sans';fill:#333;paint-order:stroke;stroke:#fff;stroke-width:2.5px;stroke-opacity:0.85;">Quarry Road</text><text x="352" y="783" transform="rotate(3 352 783)" style="font:400 13px 'Liberation Sans';fill:#333;paint-order:stroke;stroke:#fff;stroke-width:2.5px;stroke-opacity:0.85;">Cabra Road</text><text x="510" y="910" transform="rotate(-72 510 910)" style="font:400 12px 'Liberation Sans';fill:#a479a0;paint-order:stroke;stroke:#fff;stroke-width:2.5px;stroke-opacity:0.85;">Cabra West C Ward 1986</text><text x="590" y="868" transform="rotate(64 590 868)" style="font:400 12px 'Liberation Sans';fill:#333;paint-order:stroke;stroke:#fff;stroke-width:2.5px;stroke-opacity:0.85;">Cabra Drive</text><text x="336" y="918" transform="rotate(4 336 918)" style="font:400 13px 'Liberation Sans';fill:#a479a0;paint-order:stroke;stroke:#fff;stroke-width:2.5px;stroke-opacity:0.85;">gorman Middle</text><text x="336" y="947" transform="rotate(5 336 947)" style="font:400 12px 'Liberation Sans';fill:#333;paint-order:stroke;stroke:#fff;stroke-width:2.5px;stroke-opacity:0.85;">ragh Road</text><text x="536" y="968" transform="rotate(37 536 968)" style="font:400 12px 'Liberation Sans';fill:#333;paint-order:stroke;stroke:#fff;stroke-width:2.5px;stroke-opacity:0.85;">Old Cabra Road</text><text x="632" y="1028" transform="rotate(-55 632 1028)" style="font:400 12px 'Liberation Sans';fill:#333;paint-order:stroke;stroke:#fff;stroke-width:2.5px;stroke-opacity:0.85;">Cabra Drive</text><text x="336" y="1024" transform="rotate(10 336 1024)" style="font:400 12px 'Liberation Sans';fill:#333;paint-order:stroke;stroke:#fff;stroke-width:2.5px;stroke-opacity:0.85;">eigh Park</text><text x="700" y="992" transform="rotate(35 700 992)" style="font:400 12px 'Liberation Sans';fill:#333;paint-order:stroke;stroke:#fff;stroke-width:2.5px;stroke-opacity:0.85;">Cabra</text><text x="705" y="395" transform="rotate(0 705 395)" style="font:400 12px 'Liberation Sans';fill:#1f8a4a;font-style:italic;paint-order:stroke;stroke:#fff;stroke-width:2.5px;stroke-opacity:0.85;">No</text><text x="700" y="412" transform="rotate(0 700 412)" style="font:400 12px 'Liberation Sans';fill:#1f8a4a;font-style:italic;paint-order:stroke;stroke:#fff;stroke-width:2.5px;stroke-opacity:0.85;">Fionn</text><text x="705" y="429" transform="rotate(0 705 429)" style="font:400 12px 'Liberation Sans';fill:#1f8a4a;font-style:italic;paint-order:stroke;stroke:#fff;stroke-width:2.5px;stroke-opacity:0.85;">GAA</text><rect x="590" y="778" width="29" height="23" rx="2" fill="#f2f2cf" stroke="#c7c79c" stroke-width="1"/><text x="594" y="795" transform="rotate(0 594 795)" style="font:400 14px 'Liberation Sans';fill:#5a6420;">R14</text><text x="583.5" y="768" transform="rotate(0 583.5 768)" style="font:700 14px 'Liberation Sans';fill:#333;paint-order:stroke;stroke:#fff;stroke-width:2.5px;stroke-opacity:0.85;">Gas station 1</text><path d="M631 818 C627 808 617.5 800 617.5 790 A13.6 13.6 0 0 1 644.7 790 C644.7 800 635 808 631 818Z" fill="#0a7bd6" stroke="#0a5fb0" stroke-width="0.8"/><circle cx="631.2" cy="789.6" r="5" fill="#fff"/><circle cx="631.2" cy="789.6" r="3.3" fill="#eaeaea"/></svg>
<div class="b" style="left:349.6px;top:219.3px;width:37.8px;height:75.5px;z-index:4;background:#fff;border:1px solid #555;border-radius:19px;box-shadow:0 1px 4px rgba(0,0,0,0.35)"></div>
<div class="b" style="left:359px;top:237.5px;width:18px;height:2px;z-index:5;background:#555"></div>
<div class="b" style="left:367px;top:229.5px;width:2px;height:18px;z-index:5;background:#555"></div>
<div class="b" style="left:359px;top:276px;width:18px;height:2px;z-index:5;background:#555"></div>
<div class="b" style="left:349.6px;top:309.6px;width:37.8px;height:37.8px;z-index:4;background:#fff;border:1px solid #555;border-radius:50%;box-shadow:0 1px 4px rgba(0,0,0,0.35)"></div>
<svg class="ic" style="left:357px;top:317.5px;width:23px;height:23px;z-index:5;" viewBox="0 0 24 24"><path fill="#666" d="M11.99 18.54l-7.37-5.73L3 14.07l9 7 9-7-1.63-1.27-7.38 5.74zM12 16l7.36-5.73L21 9l-9-7-9 7 1.63 1.27L12 16z"/></svg>
<div class="b" style="left:685px;top:80px;width:40px;height:1000px;z-index:8;background:linear-gradient(90deg,rgba(0,0,0,0),rgba(0,0,0,0.13))"></div>
<div class="b" style="left:725px;top:80px;width:1195px;height:125px;z-index:10;background:#005684"></div>
<div class="b" style="left:725px;top:205px;width:1195px;height:85px;z-index:10;background:#fff"></div>
<div class="b" style="left:725px;top:290px;width:1195px;height:790px;z-index:10;background:#fff"></div>
<div class="b" style="left:1570.6px;top:122.75px;width:189.4px;height:40px;z-index:11;background:rgba(0,0,0,0.1);border-radius:20px"></div>
<div class="b" style="left:1572.75px;top:126px;width:74px;height:32.7px;z-index:12;background:#fff;border-radius:17px;box-shadow:0 1px 3px rgba(0,0,0,0.2)"></div>
<svg class="ic" style="left:1794.75px;top:127.85px;width:30.6px;height:30.6px;z-index:12;" viewBox="0 0 24 24"><path fill="#fff" d="M12 2C6.48 2 2 6.48 2 12s4.48 10 10 10 10-4.48 10-10S17.52 2 12 2zm1 17h-2v-2h2v2zm2.07-7.75l-.9.92C13.45 12.9 13 13.5 13 15h-2v-.5c0-1.1.45-2.1 1.17-2.830l1.24-1.26c.37-.36.59-.86.59-1.41 0-1.1-.9-2-2-2s-2 .9-2 2H8c0-2.21 1.79-4 4-4s4 1.79 4 4c0 .88-.36 1.68-.93 2.25z"/></svg>
<svg class="ic" style="left:1854.7px;top:127.3px;width:30.4px;height:30.4px;z-index:12;" viewBox="0 0 24 24"><path fill="#fff" d="M19 6.41L17.59 5 12 10.59 6.41 5 5 6.41 10.59 12 5 17.59 6.41 19 12 13.41 17.59 19 19 17.59 13.41 12z"/></svg>
<svg class="ic" style="left:1519.9px;top:245.25px;width:22.7px;height:22.7px;z-index:12;" viewBox="0 0 24 24"><path fill="#0b5785" d="M12 4.5C7 4.5 2.730 7.61 1 12c1.73 4.39 6 7.5 11 7.5s9.27-3.11 11-7.5c-1.73-4.39-6-7.5-11-7.5zM12 17c-2.76 0-5-2.24-5-5s2.24-5 5-5 5 2.24 5 5-2.24 5-5 5zm0-8c-1.66 0-3 1.34-3 3s1.34 3 3 3 3-1.34 3-3-1.34-3-3-3z"/></svg>
<div class="b" style="left:1639.4px;top:235.3px;width:125.3px;height:44.2px;z-index:12;border:1px solid #dcdcdc;border-radius:4px;background:#fff"></div>
<svg class="ic" style="left:1653.7px;top:245.7px;width:23.7px;height:23.7px;z-index:12;" viewBox="0 0 24 24"><path fill="rgba(0,0,0,0.38)" d="M19 6.41L17.59 5 12 10.59 6.41 5 5 6.41 10.59 12 5 17.59 6.41 19 12 13.41 17.59 19 19 17.59 13.41 12z"/></svg>
<div class="b" style="left:1780px;top:235.3px;width:109.8px;height:44.2px;z-index:12;background:#e0e0e0;border-radius:4px"></div>
<svg class="ic" style="left:1794.2px;top:245.2px;width:23px;height:23px;z-index:12;" viewBox="0 0 24 24"><path fill="rgba(0,0,0,0.38)" d="M9 16.17L4.83 12l-1.42 1.41L9 19 21 7l-1.41-1.41z"/></svg>
<div class="b" style="left:745px;top:290px;width:1148px;height:157.5px;z-index:11;background:#fff;border-radius:0 0 4px 4px;box-shadow:0 0 18px 8px rgba(30,50,70,0.04)"></div>
<div class="b" style="left:725px;top:262px;width:1195px;height:28px;z-index:11;background:#fff"></div>
<div class="b" style="left:725px;top:290px;width:1195px;height:200px;overflow:hidden;z-index:12"><div class="b" style="left:40px;top:-60px;width:1108px;height:132px;border:1px solid #e0e0e0;border-radius:6px"></div></div>
<div class="b" style="left:781.3px;top:296.3px;width:298px;height:49px;z-index:13;border:1px solid #d9d9d9;border-radius:4px"></div>
<div class="b" style="left:1095.3px;top:296.3px;width:297.2px;height:49px;z-index:13;border:1px solid #d9d9d9;border-radius:4px"></div>
<div class="b" style="left:1408.5px;top:296.3px;width:297.5px;height:49px;z-index:13;border:1px solid #d9d9d9;border-radius:4px"></div>
<svg class="ic" style="left:1365.3px;top:318.9px;width:13.100000000000136px;height:6.5px;z-index:14" viewBox="0 0 10 5" preserveAspectRatio="none"><path d="M0 0H10L5 5Z" fill="rgba(0,0,0,0.54)"/></svg>
<svg class="ic" style="left:1679px;top:318.9px;width:13.299999999999955px;height:6.5px;z-index:14" viewBox="0 0 10 5" preserveAspectRatio="none"><path d="M0 0H10L5 5Z" fill="rgba(0,0,0,0.54)"/></svg>
<svg class="ic" style="left:1730.65px;top:305.3px;width:32.4px;height:32.4px;z-index:14;" viewBox="0 0 24 24"><path fill="rgba(0,0,0,0.38)" d="M19.14 12.94c.04-.3.06-.61.06-.94 0-.32-.02-.64-.07-.94l2.03-1.58c.18-.14.23-.41.12-.61l-1.92-3.32c-.12-.22-.37-.29-.59-.22l-2.39.96c-.5-.38-1.03-.7-1.62-.94l-.36-2.54c-.04-.24-.24-.41-.48-.41h-3.84c-.24 0-.43.17-.47.41l-.36 2.54c-.59.24-1.13.57-1.62.94l-2.39-.96c-.22-.08-.47 0-.59.22L2.74 8.87c-.12.21-.08.47.12.61l2.03 1.58c-.05.3-.09.63-.09.94s.02.64.07.94l-2.03 1.58c-.18.14-.23.41-.12.61l1.92 3.32c.12.22.37.29.59.22l2.39-.96c.5.38 1.03.7 1.62.94l.36 2.54c.05.24.24.41.48.41h3.84c.24 0 .44-.17.47-.41l.36-2.54c.59-.24 1.13-.56 1.62-.94l2.39.96c.22.08.47 0 .59-.22l1.92-3.32c.12-.22.07-.47-.12-.61l-2.01-1.58zM12 15.6c-1.98 0-3.6-1.62-3.6-3.6s1.62-3.6 3.6-3.6 3.6 1.62 3.6 3.6-1.62 3.6-3.6 3.6z"/></svg>
<svg class="ic" style="left:1781.5px;top:305.8px;width:30px;height:30px;z-index:14;" viewBox="0 0 24 24"><path fill="rgba(0,0,0,0.38)" d="M6 19c0 1.1.9 2 2 2h8c1.1 0 2-.9 2-2V7H6v12zM19 4h-3.5l-1-1h-5l-1 1H5v2h14V4z"/></svg>
<svg class="ic" style="left:1832px;top:306px;width:30px;height:30px;z-index:14;" viewBox="0 0 24 24"><path fill="rgba(0,0,0,0.38)" d="M11 18c0 1.1-.9 2-2 2s-2-.9-2-2 .9-2 2-2 2 .9 2 2zm-2-8c-1.1 0-2 .9-2 2s.9 2 2 2 2-.9 2-2-.9-2-2-2zm0-6c-1.1 0-2 .9-2 2s.9 2 2 2 2-.9 2-2-.9-2-2-2zm6 4c1.1 0 2-.9 2-2s-.9-2-2-2-2 .9-2 2 .9 2 2 2zm0 2c-1.1 0-2 .9-2 2s.9 2 2 2 2-.9 2-2-.9-2-2-2zm0 6c-1.1 0-2 .9-2 2s.9 2 2 2 2-.9 2-2-.9-2-2-2z"/></svg>
<div class="b" style="left:765.3px;top:383.3px;width:117.2px;height:44.2px;z-index:13;border:1px solid #dcdcdc;border-radius:4px"></div>
<div class="b" style="left:745px;top:468px;width:1148px;height:309px;z-index:11;background:#fff;border-radius:4px;box-shadow:0 0 18px 8px rgba(30,50,70,0.04)"></div>
<svg class="ic" style="left:853.8px;top:496.7px;width:22.1px;height:22.1px;z-index:14;" viewBox="0 0 24 24"><path fill="#e0e0e0" d="M12 2C6.48 2 2 6.48 2 12s4.48 10 10 10 10-4.48 10-10S17.52 2 12 2zm1 15h-2v-6h2v6zm0-8h-2V7h2v2z"/></svg>
<div class="b" style="left:1581.7px;top:488px;width:290.8px;height:40px;z-index:13;background:#efefef;border-radius:20px"></div>
<div class="b" style="left:1584.2px;top:491.3px;width:97.5px;height:34px;z-index:14;border:1.5px solid #0b5785;background:#eef3f9;border-radius:17px"></div>
<div class="b" style="left:765.4px;top:548.4px;width:1107.4px;height:143px;z-index:13;border:1px solid #e0e0e0;border-radius:6px"></div>
<div class="b" style="left:766px;top:608px;width:1106px;height:1px;z-index:13;background:#e0e0e0"></div>
<div class="b" style="left:766.8px;top:609.75px;width:1104.2px;height:80.25px;z-index:16;border:3px solid #ffc433;border-radius:9px;box-shadow:0 0 5px rgba(255,170,70,0.45), inset 0 0 6px rgba(255,170,70,0.45)"></div>
<div class="b" style="left:781px;top:624.1px;width:224.75px;height:51.4px;z-index:14;border:1px solid #d9d9d9;border-radius:4px"></div>
<svg class="ic" style="left:978.7px;top:648.3px;width:12.799999999999955px;height:6.7000000000000455px;z-index:14" viewBox="0 0 10 5" preserveAspectRatio="none"><path d="M0 0H10L5 5Z" fill="rgba(0,0,0,0.54)"/></svg>
<div class="b" style="left:1021.5px;top:624.4px;width:224.8px;height:49px;z-index:14;border:1px solid #d9d9d9;border-radius:4px"></div>
<div class="b" style="left:1137px;top:630px;width:20px;height:40px;z-index:41;background:#fff"></div>
<svg class="ic" style="left:1159.3px;top:637.6px;width:24.3px;height:24.3px;z-index:14;" viewBox="0 0 24 24"><path fill="rgba(0,0,0,0.38)" d="M19 6.41L17.59 5 12 10.59 6.41 5 5 6.41 10.59 12 5 17.59 6.41 19 12 13.41 17.59 19 19 17.59 13.41 12z"/></svg>
<svg class="ic" style="left:1208.6px;top:637.2px;width:25.6px;height:25.6px;z-index:14;" viewBox="0 0 24 24"><path fill="rgba(0,0,0,0.38)" d="M3 17.25V21h3.75L17.81 9.94l-3.75-3.750L3 17.25zM20.71 7.04c.39-.39.39-1.02 0-1.41l-2.34-2.34c-.39-.39-1.02-.39-1.41 0l-1.83 1.83 3.75 3.75 1.83-1.83z"/></svg>
<div class="b" style="left:1262px;top:674.2px;width:232px;height:1px;z-index:14;background:#d6d6d6"></div>
<div class="b" style="left:1508.9px;top:674.2px;width:232.9px;height:1px;z-index:14;background:#d6d6d6"></div>
<div class="b" style="left:1266.9px;top:624.9px;width:209.1px;height:39.9px;z-index:14;background:#e0e0e0;border-radius:20px"></div>
<div class="b" style="left:1513.9px;top:625.1px;width:212.7px;height:39.6px;z-index:14;background:#e0e0e0;border-radius:20px"></div>
<svg class="ic" style="left:1289.15px;top:634px;width:22px;height:22px;z-index:15" viewBox="0 0 22 22"><circle cx="11" cy="11" r="8.4" fill="none" stroke="#3a3a3a" stroke-width="1.7"/><path d="M8.2 16V9.6Q8.2 6.3 11 6.3Q13.8 6.3 13.8 9.6V16M8.2 11.6H13.8" fill="none" stroke="#3a3a3a" stroke-width="1.7"/></svg>
<svg class="ic" style="left:1537.3px;top:634px;width:22px;height:22px;z-index:15" viewBox="0 0 22 22"><circle cx="11" cy="11" r="8.4" fill="none" stroke="#3a3a3a" stroke-width="1.7"/><path d="M8.2 16V9.6Q8.2 6.3 11 6.3Q13.8 6.3 13.8 9.6V16M8.2 11.6H13.8" fill="none" stroke="#3a3a3a" stroke-width="1.7"/></svg>
<svg class="ic" style="left:1399px;top:633.5px;width:22.9px;height:22.9px;z-index:15;" viewBox="0 0 24 24"><path fill="rgba(0,0,0,0.75)" d="M3 17.25V21h3.75L17.81 9.94l-3.75-3.750L3 17.25zM20.71 7.04c.39-.39.39-1.02 0-1.41l-2.34-2.34c-.39-.39-1.02-.39-1.41 0l-1.83 1.83 3.75 3.75 1.83-1.83z"/></svg>
<svg class="ic" style="left:1434.2px;top:634px;width:22.5px;height:22.5px;z-index:15;" viewBox="0 0 24 24"><path fill="rgba(0,0,0,0.8)" d="M19 6.41L17.59 5 12 10.59 6.41 5 5 6.41 10.59 12 5 17.59 6.41 19 12 13.41 17.59 19 19 17.59 13.41 12z"/></svg>
<svg class="ic" style="left:1650.5px;top:633.5px;width:22.9px;height:22.9px;z-index:15;" viewBox="0 0 24 24"><path fill="rgba(0,0,0,0.75)" d="M3 17.25V21h3.75L17.81 9.94l-3.75-3.750L3 17.25zM20.71 7.04c.39-.39.39-1.02 0-1.41l-2.34-2.34c-.39-.39-1.02-.39-1.41 0l-1.83 1.83 3.75 3.75 1.83-1.83z"/></svg>
<svg class="ic" style="left:1685.7px;top:634px;width:22.5px;height:22.5px;z-index:15;" viewBox="0 0 24 24"><path fill="rgba(0,0,0,0.8)" d="M19 6.41L17.59 5 12 10.59 6.41 5 5 6.41 10.59 12 5 17.59 6.41 19 12 13.41 17.59 19 19 17.59 13.41 12z"/></svg>
<div class="b" style="left:1754.3px;top:621.5px;width:54.4px;height:54px;z-index:17;border:3px solid #ffc433;background:#f0f0f0;border-radius:50%;box-shadow:0 0 4px rgba(255,170,70,0.5)"></div>
<svg class="ic" style="left:1765.9px;top:634.7px;width:32.3px;height:32.3px;z-index:18;" viewBox="0 0 24 24"><path fill="rgba(0,0,0,0.38)" d="M19.14 12.94c.04-.3.06-.61.06-.94 0-.32-.02-.64-.07-.94l2.03-1.58c.18-.14.23-.41.12-.61l-1.92-3.32c-.12-.22-.37-.29-.59-.22l-2.39.96c-.5-.38-1.03-.7-1.62-.94l-.36-2.54c-.04-.24-.24-.41-.48-.41h-3.84c-.24 0-.43.17-.47.41l-.36 2.54c-.59.24-1.13.57-1.62.94l-2.39-.96c-.22-.08-.47 0-.59.22L2.74 8.87c-.12.21-.08.47.12.61l2.03 1.58c-.05.3-.09.63-.09.94s.02.64.07.94l-2.03 1.58c-.18.14-.23.41-.12.61l1.92 3.32c.12.22.37.29.59.22l2.39-.96c.5.38 1.03.7 1.62.94l.36 2.54c.05.24.24.41.48.41h3.84c.24 0 .44-.17.47-.41l.36-2.54c.59-.24 1.13-.56 1.62-.94l2.39.96c.22.08.47 0 .59-.22l1.92-3.32c.12-.22.07-.47-.12-.61l-2.01-1.58zM12 15.6c-1.98 0-3.6-1.62-3.6-3.6s1.62-3.6 3.6-3.6 3.6 1.62 3.6 3.6-1.62 3.6-3.6 3.6z"/></svg>
<svg class="ic" style="left:1816.4px;top:634.5px;width:31.5px;height:31.5px;z-index:15;" viewBox="0 0 24 24"><path fill="rgba(0,0,0,0.38)" d="M6 19c0 1.1.9 2 2 2h8c1.1 0 2-.9 2-2V7H6v12zM19 4h-3.5l-1-1h-5l-1 1H5v2h14V4z"/></svg>
<div class="b" style="left:1696.9px;top:585.3px;width:168.8px;height:29.3px;z-index:19;background:#616161;border-radius:4px"></div>
<svg class="ic" style="left:1750px;top:655px;width:24px;height:70px;z-index:20" viewBox="1750 655 24 70"><line x1="1761.5" y1="667" x2="1761.5" y2="718" stroke="#ffc433" stroke-width="3" stroke-dasharray="20 5"/><circle cx="1761.2" cy="666.5" r="5" fill="#ffc433"/></svg>
<svg class="ic" style="left:1772px;top:662px;width:22px;height:32px;z-index:21" viewBox="0 0 22 32">
<path d="M6 2.5 Q6 1 7.5 1 Q9 1 9 2.5 V11 Q9.5 9.6 11 9.8 Q12.4 10 12.5 11.5 Q13 10.4 14.4 10.6 Q15.8 10.9 15.8 12.3 Q16.4 11.6 17.6 11.9 Q19 12.3 19 14 V20 Q19 23.5 17 25.5 H8.5 Q6.5 23 4 20 L1.6 16.6 Q1 15.4 2.1 14.7 Q3.2 14 4.3 15.2 L6 17Z" fill="#fff" stroke="#111" stroke-width="1.1" stroke-linejoin="round"/>
<rect x="8.4" y="25.5" width="9.6" height="5.5" fill="#ffc433" stroke="#111" stroke-width="1.1"/><rect x="13.5" y="27.3" width="2" height="2" fill="#111"/>
</svg>
<div class="b" style="left:765.3px;top:712.2px;width:135.2px;height:44.5px;z-index:13;border:1px solid #dcdcdc;border-radius:4px"></div>
<div class="b" style="left:1521.7px;top:717.4px;width:390.8px;height:107.8px;z-index:25;border:3px solid #ffc433;background:#fdeedd;border-radius:9px;box-shadow:0 0 4px rgba(255,170,70,0.45)"></div>
<div class="b" style="left:1548px;top:686.4px;width:28.2px;height:33.1px;z-index:26;border:3px solid #ffc433;background:#fff;border-radius:9px;box-shadow:0 0 4px rgba(255,170,70,0.45)"></div>
<div class="b" style="left:745px;top:797px;width:1148px;height:300px;z-index:11;background:#fff;border-radius:4px;box-shadow:0 0 18px 8px rgba(30,50,70,0.04)"></div>
<svg class="ic" style="left:986px;top:816.5px;width:22.1px;height:22.1px;z-index:14;" viewBox="0 0 24 24"><path fill="#e0e0e0" d="M12 2C6.48 2 2 6.48 2 12s4.48 10 10 10 10-4.48 10-10S17.52 2 12 2zm1 15h-2v-6h2v6zm0-8h-2V7h2v2z"/></svg>
<div class="b" style="left:765.1px;top:861.1px;width:1107.7px;height:141.1px;z-index:13;border:1px solid #e0e0e0;border-radius:6px"></div>
<div class="b" style="left:766px;top:921px;width:1106px;height:1px;z-index:13;background:#e0e0e0"></div>
<div class="b" style="left:765.1px;top:1023.5px;width:170.3px;height:43.7px;z-index:13;border:1px solid #dcdcdc;border-radius:4px"></div>
<div class="b" style="left:1913px;top:381px;width:7px;height:202px;z-index:12;background:#d4d4d4"></div>
<div class="t" style="left:98.47px;top:18.00px;font:400 32px/42px 'Liberation Sans';color:#fff;z-index:40;transform:scaleX(0.9251);transform-origin:0 0;">ThingsBoard</div>
<div class="t" style="left:387.47px;top:26.75px;font:400 23.6px/31px 'Liberation Sans';color:rgba(255,255,255,0.78);z-index:40;transform:scaleX(0.9645);transform-origin:0 0;">Dashboards</div>
<div class="t" style="left:534.44px;top:27.40px;font:400 18.2px/24px 'Liberation Sans';color:#fff;z-index:40;transform:scaleX(1.1556);transform-origin:0 0;">></div>
<div class="t" style="left:607.53px;top:26.75px;font:400 23.6px/31px 'Liberation Sans';color:#fff;z-index:40;transform:scaleX(0.9684);transform-origin:0 0;">Gas stations map</div>
<div class="t" style="left:1692.50px;top:16.90px;font:400 16.7px/22px 'Liberation Sans';color:rgba(255,255,255,0.95);z-index:40;transform:scaleX(0.9507);transform-origin:0 0;">John Doe</div>
<div class="t" style="left:1693.00px;top:40.90px;font:400 16.9px/22px 'Liberation Sans';color:rgba(255,255,255,0.72);z-index:40;transform:scaleX(0.9592);transform-origin:0 0;">Tenant administrator</div>
<div class="t" style="left:51.32px;top:93.85px;font:400 18.2px/24px 'Liberation Sans';color:#fff;z-index:40;transform:scaleX(1.0273);transform-origin:0 0;-webkit-text-stroke:0.75px #fff;">Home</div>
<div class="t" style="left:53.37px;top:144.85px;font:400 18.2px/24px 'Liberation Sans';color:#fff;z-index:40;transform:scaleX(1.0313);transform-origin:0 0;-webkit-text-stroke:0.75px #fff;">Alarms</div>
<div class="t" style="left:51.33px;top:195.85px;font:400 18.2px/24px 'Liberation Sans';color:#fff;z-index:40;transform:scaleX(1.0206);transform-origin:0 0;-webkit-text-stroke:0.75px #fff;">Dashboards</div>
<div class="t" style="left:51.22px;top:246.85px;font:400 18.2px/24px 'Liberation Sans';color:#fff;z-index:40;transform:scaleX(1.0746);transform-origin:0 0;-webkit-text-stroke:0.75px #fff;">Entities</div>
<div class="t" style="left:51.20px;top:297.85px;font:400 18.2px/24px 'Liberation Sans';color:#fff;z-index:40;transform:scaleX(1.0863);transform-origin:0 0;-webkit-text-stroke:0.75px #fff;">Profiles</div>
<div class="t" style="left:52.34px;top:348.85px;font:400 18.2px/24px 'Liberation Sans';color:#fff;z-index:40;transform:scaleX(1.0320);transform-origin:0 0;-webkit-text-stroke:0.75px #fff;">Customers</div>
<div class="t" style="left:51.31px;top:399.85px;font:400 18.2px/24px 'Liberation Sans';color:#fff;z-index:40;transform:scaleX(1.0327);transform-origin:0 0;-webkit-text-stroke:0.75px #fff;">Rule chains</div>
<div class="t" style="left:51.36px;top:450.85px;font:400 18.2px/24px 'Liberation Sans';color:#fff;z-index:40;transform:scaleX(1.0082);transform-origin:0 0;-webkit-text-stroke:0.75px #fff;">Edge management</div>
<div class="t" style="left:53.37px;top:501.85px;font:400 18.2px/24px 'Liberation Sans';color:#fff;z-index:40;transform:scaleX(1.0215);transform-origin:0 0;-webkit-text-stroke:0.75px #fff;">Advanced features</div>
<div class="t" style="left:51.32px;top:552.85px;font:400 18.2px/24px 'Liberation Sans';color:#fff;z-index:40;transform:scaleX(1.0245);transform-origin:0 0;-webkit-text-stroke:0.75px #fff;">Resources</div>
<div class="t" style="left:51.21px;top:603.85px;font:400 18.2px/24px 'Liberation Sans';color:#fff;z-index:40;transform:scaleX(1.0808);transform-origin:0 0;-webkit-text-stroke:0.75px #fff;">Notification center</div>
<div class="t" style="left:51.26px;top:654.85px;font:400 18.2px/24px 'Liberation Sans';color:#fff;z-index:40;transform:scaleX(1.0566);transform-origin:0 0;-webkit-text-stroke:0.75px #fff;">Mobile center</div>
<div class="t" style="left:53.37px;top:705.85px;font:400 18.2px/24px 'Liberation Sans';color:#fff;z-index:40;transform:scaleX(1.0031);transform-origin:0 0;-webkit-text-stroke:0.75px #fff;">API usage</div>
<div class="t" style="left:52.32px;top:756.85px;font:400 18.2px/24px 'Liberation Sans';color:#fff;z-index:40;transform:scaleX(1.0508);transform-origin:0 0;-webkit-text-stroke:0.75px #fff;">Settings</div>
<div class="t" style="left:52.34px;top:807.85px;font:400 18.2px/24px 'Liberation Sans';color:#fff;z-index:40;transform:scaleX(1.0352);transform-origin:0 0;-webkit-text-stroke:0.75px #fff;">Security</div>
<div class="t" style="left:338.00px;top:83.00px;font:400 16px/21px 'Liberation Sans';color:rgba(0,0,0,0.55);z-index:40;transform:scaleX(1.0833);transform-origin:0 0;">Title*</div>
<div class="t" style="left:336.50px;top:100.50px;font:400 41.4px/54px 'Liberation Sans';color:#1a1a1a;z-index:40;transform:scaleX(0.9876);transform-origin:0 0;-webkit-text-stroke:0.95px #1a1a1a;">Gas stations map</div>
<div class="t" style="left:335.00px;top:167.75px;font:400 21.4px/28px 'Liberation Sans';color:#000;z-index:40;">Map</div>
<div class="t" style="left:753.59px;top:101.90px;font:400 30.4px/40px 'Liberation Sans';color:#fff;z-index:40;transform:scaleX(1.0373);transform-origin:0 0;">Map</div>
<div class="t" style="left:754.05px;top:151.00px;font:400 21.4px/28px 'Liberation Sans';color:rgba(255,255,255,0.78);z-index:40;transform:scaleX(0.9744);transform-origin:0 0;">Map</div>
<div class="t" style="left:1587.01px;top:130.60px;font:400 18px/24px 'Liberation Sans';color:#0b5785;z-index:40;transform:scaleX(1.0308);transform-origin:0 0;-webkit-text-stroke:0.74px #0b5785;">Basic</div>
<div class="t" style="left:1663.98px;top:129.60px;font:400 18.5px/25px 'Liberation Sans';color:rgba(255,255,255,0.78);z-index:40;transform:scaleX(0.9585);transform-origin:0 0;-webkit-text-stroke:0.76px rgba(255,255,255,0.78);">Advanced</div>
<div class="t" style="left:1547.73px;top:244.20px;font:400 19.8px/26px 'Liberation Sans';color:#0b5785;z-index:40;transform:scaleX(0.9373);transform-origin:0 0;-webkit-text-stroke:0.81px #0b5785;">Preview</div>
<div class="t" style="left:1681.80px;top:244.20px;font:400 19.8px/26px 'Liberation Sans';color:rgba(0,0,0,0.38);z-index:40;transform:scaleX(0.9506);transform-origin:0 0;-webkit-text-stroke:0.81px rgba(0,0,0,0.38);">Decline</div>
<div class="t" style="left:1824.21px;top:244.20px;font:400 19.8px/26px 'Liberation Sans';color:rgba(0,0,0,0.38);z-index:40;transform:scaleX(0.9120);transform-origin:0 0;-webkit-text-stroke:0.81px rgba(0,0,0,0.38);">Apply</div>
<div class="t" style="left:794.28px;top:309.30px;font:400 18.6px/25px 'Liberation Sans';color:rgba(0,0,0,0.87);z-index:40;transform:scaleX(1.0110);transform-origin:0 0;">My map layer</div>
<div class="t" style="left:1109.34px;top:309.10px;font:400 18.6px/25px 'Liberation Sans';color:rgba(0,0,0,0.87);z-index:40;transform:scaleX(0.9638);transform-origin:0 0;">OpenStreet</div>
<div class="t" style="left:1423.90px;top:309.10px;font:400 18.6px/25px 'Liberation Sans';color:rgba(0,0,0,0.87);z-index:40;transform:scaleX(0.9947);transform-origin:0 0;">WorldStreetMap</div>
<div class="t" style="left:785.40px;top:392.50px;font:400 19.3px/26px 'Liberation Sans';color:#0b5785;z-index:40;transform:scaleX(0.9470);transform-origin:0 0;-webkit-text-stroke:0.79px #0b5785;">Add layer</div>
<div class="t" style="left:765.02px;top:494.10px;font:400 21.5px/28px 'Liberation Sans';color:rgba(0,0,0,0.87);z-index:40;transform:scaleX(0.9231);transform-origin:0 0;-webkit-text-stroke:0.88px rgba(0,0,0,0.87);">Overlays</div>
<div class="t" style="left:1599.33px;top:496.70px;font:400 17.7px/24px 'Liberation Sans';color:#0b5785;z-index:40;transform:scaleX(1.0367);transform-origin:0 0;-webkit-text-stroke:0.73px #0b5785;">Markers</div>
<div class="t" style="left:1696.48px;top:496.70px;font:400 17.7px/24px 'Liberation Sans';color:rgba(0,0,0,0.38);z-index:40;transform:scaleX(1.0169);transform-origin:0 0;">Polygons</div>
<div class="t" style="left:1800.70px;top:496.70px;font:400 17.7px/24px 'Liberation Sans';color:rgba(0,0,0,0.38);z-index:40;">Circles</div>
<div class="t" style="left:780.54px;top:564.70px;font:400 18.5px/25px 'Liberation Sans';color:rgba(0,0,0,0.54);z-index:40;transform:scaleX(0.9614);transform-origin:0 0;">Source</div>
<div class="t" style="left:1268.37px;top:565.00px;font:400 18.5px/25px 'Liberation Sans';color:rgba(0,0,0,0.54);z-index:40;transform:scaleX(0.9643);transform-origin:0 0;">Latitude key</div>
<div class="t" style="left:1518.64px;top:565.00px;font:400 18.5px/25px 'Liberation Sans';color:rgba(0,0,0,0.54);z-index:40;transform:scaleX(0.9796);transform-origin:0 0;">Longitude key</div>
<div class="t" style="left:794.54px;top:636.80px;font:400 18.6px/25px 'Liberation Sans';color:rgba(0,0,0,0.87);z-index:40;transform:scaleX(1.0295);transform-origin:0 0;">Entity</div>
<div class="t" style="left:1036.00px;top:636.80px;font:400 18.6px/25px 'Liberation Sans';color:rgba(0,0,0,0.87);z-index:40;">Gas stations</div>
<div class="t" style="left:1316.37px;top:631.00px;font:400 18.8px/25px 'Liberation Sans';color:rgba(0,0,0,0.8);z-index:40;transform:scaleX(1.0124);transform-origin:0 0;-webkit-text-stroke:0.77px rgba(0,0,0,0.8);">latitude</div>
<div class="t" style="left:1561.76px;top:631.00px;font:400 18.8px/25px 'Liberation Sans';color:rgba(0,0,0,0.8);z-index:40;transform:scaleX(0.9272);transform-origin:0 0;-webkit-text-stroke:0.77px rgba(0,0,0,0.8);">longit…</div>
<div class="t" style="left:1706.62px;top:589.60px;font:400 15px/20px 'Liberation Sans';color:#fff;z-index:20;transform:scaleX(1.0903);transform-origin:0 0;-webkit-text-stroke:0.61px #fff;">Marker configuration</div>
<div class="t" style="left:785.40px;top:720.50px;font:400 19.3px/26px 'Liberation Sans';color:#0b5785;z-index:40;transform:scaleX(0.9597);transform-origin:0 0;-webkit-text-stroke:0.79px #0b5785;">Add marker</div>
<div class="t" style="left:765.74px;top:815.20px;font:400 21.5px/28px 'Liberation Sans';color:rgba(0,0,0,0.87);z-index:40;transform:scaleX(0.9623);transform-origin:0 0;-webkit-text-stroke:0.88px rgba(0,0,0,0.87);">Additional datasources</div>
<div class="t" style="left:780.54px;top:877.80px;font:400 18.5px/25px 'Liberation Sans';color:rgba(0,0,0,0.54);z-index:40;transform:scaleX(0.9614);transform-origin:0 0;">Source</div>
<div class="t" style="left:1300.08px;top:877.70px;font:400 18.5px/25px 'Liberation Sans';color:rgba(0,0,0,0.54);z-index:40;transform:scaleX(0.9588);transform-origin:0 0;">Data keys</div>
<div class="t" style="left:1179.98px;top:946.20px;font:400 23px/30px 'Liberation Sans';color:rgba(0,0,0,0.38);z-index:40;transform:scaleX(1.0122);transform-origin:0 0;">No datasources configured</div>
<div class="t" style="left:785.50px;top:1031.30px;font:400 19.3px/26px 'Liberation Sans';color:#0b5785;z-index:40;transform:scaleX(0.9635);transform-origin:0 0;-webkit-text-stroke:0.79px #0b5785;">Add datasource</div>
<div class="t" style="left:1528.60px;top:719.30px;font:400 28px/37px 'Liberation Sans';color:#111;z-index:30;">Click the "gear" icon button</div>
<div class="t" style="left:1527.60px;top:752.80px;font:400 28px/37px 'Liberation Sans';color:#111;z-index:30;">next to the desired marker</div>
<div class="t" style="left:1529.60px;top:785.50px;font:400 28px/37px 'Liberation Sans';color:#111;z-index:30;">to open its configuration panel</div>
<div class="t" style="left:1554.00px;top:686.00px;font:400 26px/34px 'Liberation Sans';color:#111;z-index:31;">1</div>
</body></html>
